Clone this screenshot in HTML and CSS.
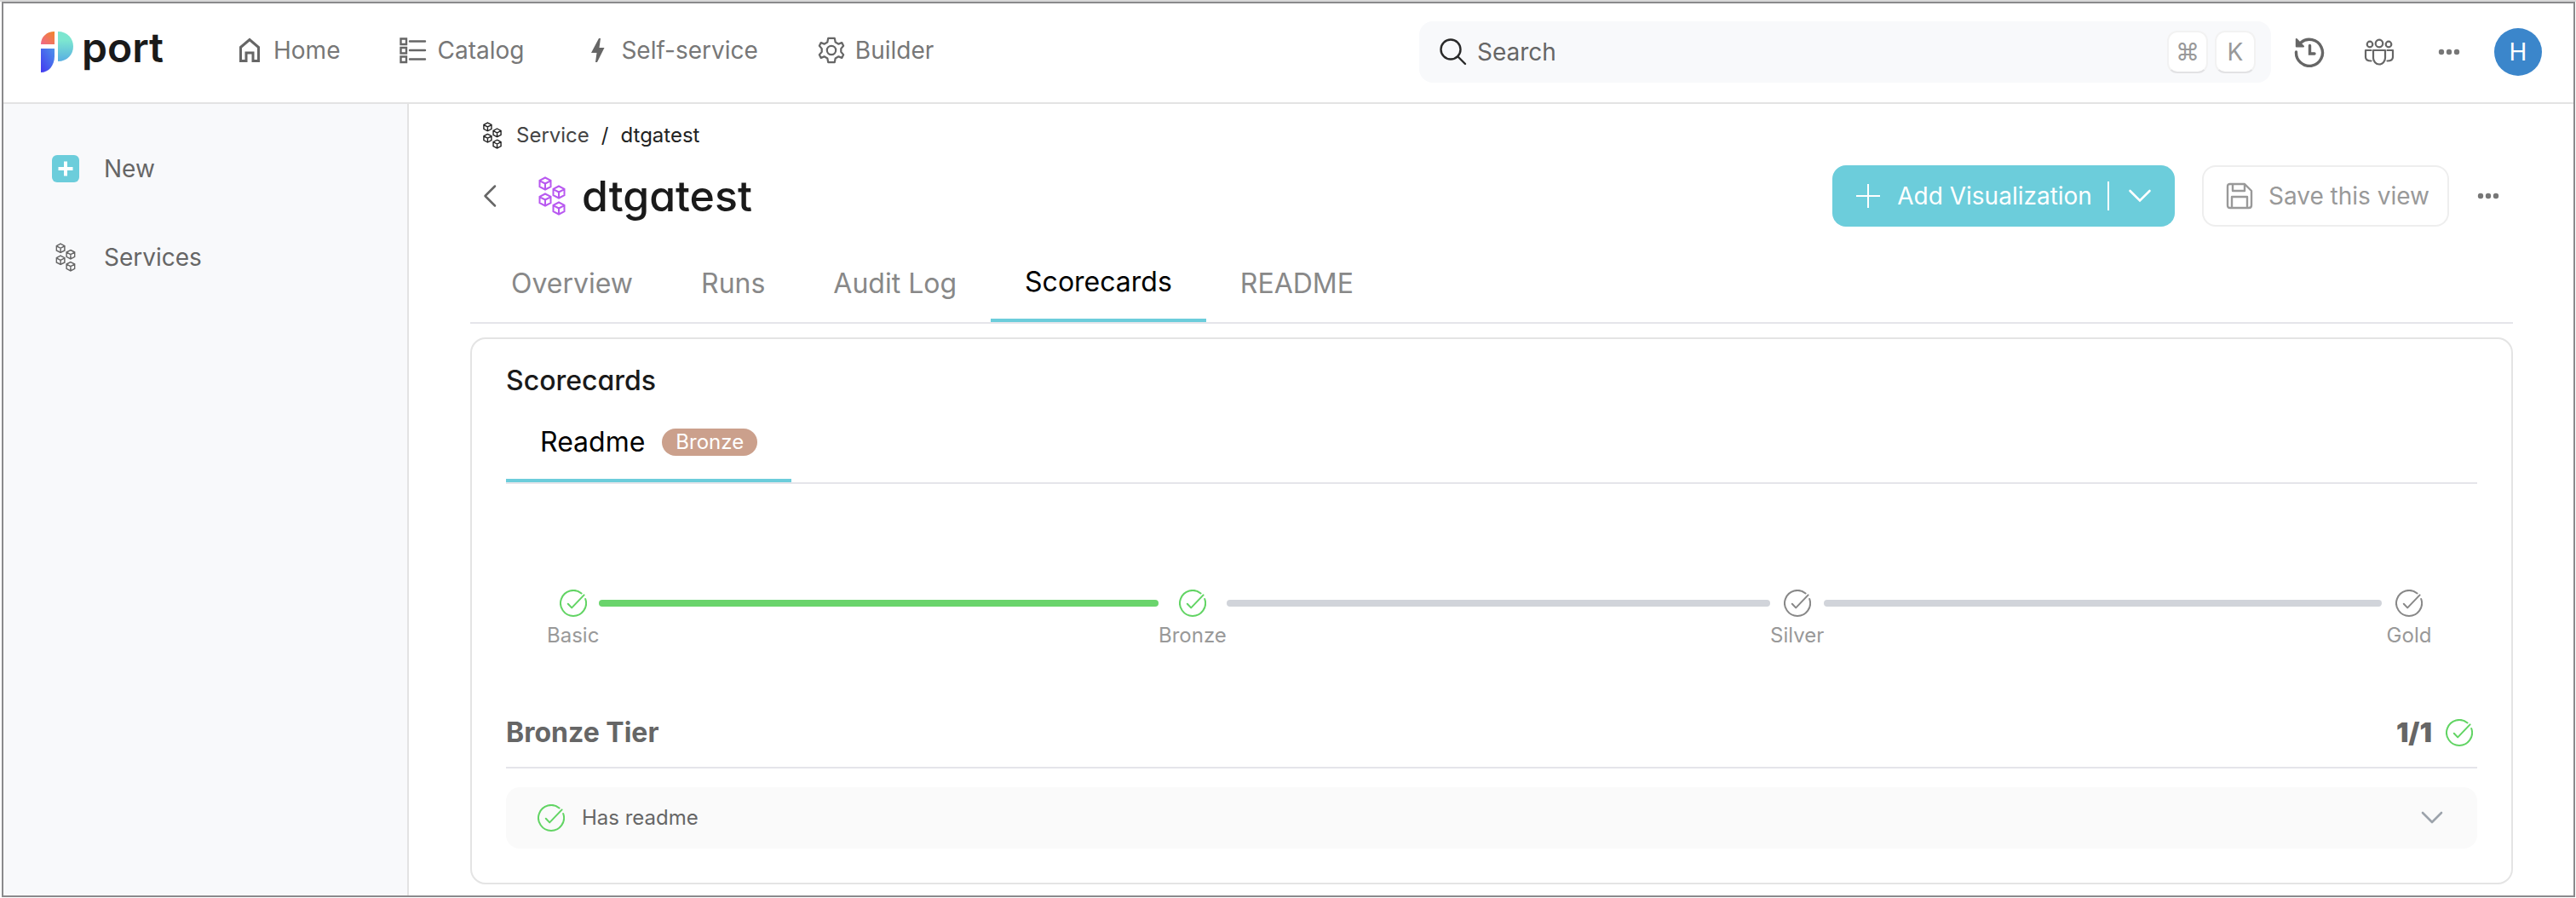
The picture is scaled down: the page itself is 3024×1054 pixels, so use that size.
FILE: index.html
```html
<!DOCTYPE html>
<html lang="en">
<head>
<meta charset="utf-8">
<title>dtgatest</title>
<meta name="viewport" content="width=device-width, initial-scale=1">
<link rel="stylesheet" href="styles.css">
</head>
<body>
<svg class="sprite" aria-hidden="true">
  <symbol id="cube" viewBox="-8 -8 16 16"><path d="M0-7 6.5-3.6V3.6L0 7-6.5 3.6V-3.6ZM-6.5-3.4 0 0 6.5-3.4M0 0V7"/></symbol>
  <symbol id="cubes" viewBox="0 0 32 46">
    <use href="#cube" x="0" y="0" width="16" height="17"/>
    <use href="#cube" x="16" y="10" width="16" height="17"/>
    <use href="#cube" x="0" y="19" width="16" height="17"/>
    <use href="#cube" x="16" y="29" width="16" height="17"/>
  </symbol>
  <symbol id="check" viewBox="0 0 32 32"><path d="M25.6 4.4A15 15 0 1 0 30.2 11M9.8 16.8 14.2 21.4 28.6 6.4"/></symbol>
  <symbol id="dots" viewBox="0 0 36 36"><circle cx="9" cy="18" r="3.2"/><circle cx="18" cy="18" r="3.2"/><circle cx="27" cy="18" r="3.2"/></symbol>
</svg>
<div class="frame">
  <header class="topbar">
    <a class="logo" href="#">
      <svg class="logo-mark" viewBox="0 0 38 48" aria-hidden="true">
        <defs>
          <linearGradient id="warm" x1="1" y1="0" x2="0" y2="1"><stop offset="0" stop-color="#f08528"/><stop offset="1" stop-color="#f0688c"/></linearGradient>
          <linearGradient id="mint" x1="0" y1="0" x2="0" y2="1"><stop offset=".3" stop-color="#7ce6d0"/><stop offset="1" stop-color="#58aee2"/></linearGradient>
          <linearGradient id="blue" x1="1" y1="0" x2="0" y2="1"><stop offset="0" stop-color="#4c93ea"/><stop offset="1" stop-color="#4338f0"/></linearGradient>
        </defs>
        <path fill="url(#warm)" d="M16 0V15H0C0 6 7 0 16 0Z"/>
        <path fill="url(#mint)" d="M20 0C31 0 38 8 38 17.500S31 35 20 35Z"/>
        <path fill="url(#blue)" d="M0 20H16V29C16 40 9 48 0 48Z"/>
      </svg>
      <span class="logo-text">port</span>
    </a>
    <nav class="topnav" aria-label="Main">
      <a href="#"><svg class="icon" viewBox="0 0 32 32" aria-hidden="true"><path stroke-width="3" d="M5.500 12.500 16 3.500 26.500 12.500V28.500H20V19H12V28.500H5.500Z"/></svg>Home</a>
      <a href="#"><svg class="icon" viewBox="0 0 32 32" aria-hidden="true"><path stroke-width="2.400" d="M1.500 2.500h6.500v6.500h-6.500zM1.500 13h6.500v6.500h-6.500zM1.500 23.500h6.500v6.500h-6.500zM12 5.500H30M12 16H30M12 26.500H30" stroke-linecap="round"/></svg>Catalog</a>
      <a href="#"><svg class="icon" viewBox="0 0 32 32" aria-hidden="true"><path class="solid" d="M18 2H20L18.500 13H24.500L16 30H14L15.500 19H9Z"/></svg>Self-service</a>
      <a href="#"><svg class="icon" viewBox="0 0 32 34" aria-hidden="true"><path stroke-width="2.400" stroke-linejoin="round" d="M12 2H20L21 7 25 9.200 29 7.500 31 11.500 28 15V19L31 22.500 29 26.500 25 24.800 21 27 20 32H12L11 27 7 24.800 3 26.500 1 22.500 4 19V15L1 11.500 3 7.500 7 9.200 11 7Z"/><circle cx="16" cy="17" r="5.500" stroke-width="2.400"/></svg>Builder</a>
    </nav>
    <div class="search">
      <svg class="icon search-icon" viewBox="0 0 32 32" aria-hidden="true"><circle cx="13" cy="13" r="11.500" stroke-width="2.400"/><path stroke-width="2.400" stroke-linecap="round" d="M21.500 21.500 30 30"/></svg>
      <input type="text" placeholder="Search" aria-label="Search">
      <kbd>⌘</kbd><kbd>K</kbd>
    </div>
    <div class="tools">
      <button type="button" aria-label="History"><svg viewBox="0 0 36 36" aria-hidden="true"><path stroke-width="3.400" stroke-linecap="round" d="M2.500 18A15.500 15.500 0 1 0 8 7M18.500 10.500V20H24"/><path class="solid" d="M2 3V11.500H11.500Z"/><path stroke-width="2" stroke-linejoin="round" d="M2.800 3V11.500H11Z"/></svg></button>
      <button type="button" aria-label="Members"><svg viewBox="0 0 36 36" aria-hidden="true"><g stroke-width="2.200" stroke-linejoin="round" stroke-linecap="round"><circle cx="7" cy="9" r="3.300"/><circle cx="29" cy="9" r="3.300"/><circle cx="18" cy="8" r="4.300"/><path d="M11 16H25V25A7 7.500 0 0 1 11 25ZM8.500 16H2V24Q2 28.500 8.500 28.500M27.500 16H34V24Q34 28.500 27.500 28.500"/></g></svg></button>
      <button type="button" aria-label="More"><svg class="dots" aria-hidden="true"><use href="#dots"/></svg></button>
    </div>
    <button class="avatar" type="button">H</button>
  </header>
  <div class="body">
    <aside class="sidebar">
      <button type="button"><svg viewBox="0 0 32 32" aria-hidden="true"><rect class="plus-box" width="32" height="32" rx="6"/><path class="plus-sign" d="M16 7.500V24.500M7.500 16H24.500"/></svg>New</button>
      <a href="#"><svg class="cubes-thin side-cubes" aria-hidden="true"><use href="#cubes"/></svg>Services</a>
    </aside>
    <main class="main">
      <nav class="crumbs" aria-label="Breadcrumb">
        <svg class="cubes-thin" aria-hidden="true"><use href="#cubes"/></svg>
        <a href="#">Service</a><span class="slash">/</span><a class="current" href="#">dtgatest</a>
      </nav>
      <div class="title-row">
        <button class="back" type="button" aria-label="Back"><svg viewBox="0 0 32 32" aria-hidden="true"><path d="M22 4.500 10.500 16 22 27.500"/></svg></button>
        <svg class="title-icon" aria-hidden="true"><use href="#cubes"/></svg>
        <h1>dtgatest</h1>
        <button class="btn primary" type="button">
          <svg class="icon" viewBox="0 0 32 32" aria-hidden="true"><path stroke-width="2" d="M16 2V30M2 16H30"/></svg>
          <span>Add Visualization</span><i class="divider"></i>
          <svg class="icon" viewBox="0 0 32 32" aria-hidden="true"><path stroke-width="2.600" stroke-linecap="round" d="M4.500 10 16 21.500 27.500 10"/></svg>
        </button>
        <button class="btn outline" type="button">
          <svg class="icon" viewBox="0 0 32 32" aria-hidden="true"><path stroke-width="2.400" stroke-linejoin="round" d="M4 2H22L30 10V27Q30 30 27 30H5Q2 30 2 27V5Q2 2 5 2M8 2V10H22V2M7 30V17H25V30"/></svg>
          <span>Save this view</span>
        </button>
        <button class="more" type="button" aria-label="More actions"><svg class="dots" aria-hidden="true"><use href="#dots"/></svg></button>
      </div>
      <nav class="tabs page-tabs" aria-label="Entity">
        <a href="#">Overview</a><a href="#">Runs</a><a href="#">Audit Log</a><a class="active" href="#">Scorecards</a><a href="#">README</a>
      </nav>
      <section class="card">
        <h2>Scorecards</h2>
        <nav class="tabs" aria-label="Scorecards">
          <a class="active" href="#">Readme<span class="badge">Bronze</span></a>
        </nav>
        <ol class="steps">
          <li class="done"><div class="step"><svg class="check" aria-hidden="true"><use href="#check"/></svg><span>Basic</span></div><i class="bar"></i></li>
          <li class="reached"><div class="step"><svg class="check" aria-hidden="true"><use href="#check"/></svg><span>Bronze</span></div><i class="bar"></i></li>
          <li><div class="step"><svg class="check" aria-hidden="true"><use href="#check"/></svg><span>Silver</span></div><i class="bar"></i></li>
          <li><div class="step"><svg class="check" aria-hidden="true"><use href="#check"/></svg><span>Gold</span></div></li>
        </ol>
        <div class="tier"><h3>Bronze Tier</h3><strong>1/1</strong><svg class="check pass" aria-hidden="true"><use href="#check"/></svg></div>
        <button class="rule" type="button">
          <svg class="check pass" aria-hidden="true"><use href="#check"/></svg>
          <span>Has readme</span>
          <svg class="icon chevron" viewBox="0 0 32 32" aria-hidden="true"><path stroke-width="2.600" stroke-linecap="round" stroke-linejoin="round" d="M5 10 16 21 27 10"/></svg>
        </button>
      </section>
    </main>
  </div>
</div>
</body>
</html>
```
FILE: styles.css
```css
* { box-sizing: border-box; }

body {
  margin: 0;
  border-top: 2px solid #d8d8d8;
  background: #fff;
  color: #666;
  font: 28px/36px Inter, "Liberation Sans", sans-serif;
}

a { color: inherit; text-decoration: none; }
button { margin: 0; padding: 0; border: 0; background: none; color: inherit; font: inherit; cursor: pointer; }
h1, h2, h3, ol { margin: 0; padding: 0; list-style: none; }
svg { flex: none; fill: none; stroke: currentColor; }
.sprite { display: none; }
.solid { fill: currentColor; stroke: none; }
.icon { width: 32px; height: 32px; }
.dots { width: 36px; height: 36px; display: block; fill: currentColor; stroke: none; }

.frame {
  display: flex;
  flex-direction: column;
  min-height: calc(100vh - 3px);
  margin: 0 1px 1px 2px;
  border: 2px solid #8a8a8c;
}

/* Top bar */
.topbar {
  display: flex;
  align-items: center;
  height: 118px;
  padding: 0 37px 2px 44px;
  border-bottom: 2px solid #e3e3e3;
}
.logo { display: flex; align-items: center; gap: 10px; flex: 0 0 229px; }
.logo-mark { width: 38px; height: 48px; stroke: none; }
.logo-text { color: #1a1a1a; font-size: 48px; font-weight: 600; line-height: 48px; padding-bottom: 10px; }
.topnav { display: flex; gap: 70px; padding-bottom: 4px; color: #777; white-space: nowrap; }
.topnav a { display: flex; align-items: center; gap: 12px; }
.topnav svg { color: #666; }
.search {
  display: flex;
  align-items: center;
  gap: 8px;
  flex: 0 1 1000px;
  height: 72px;
  margin-left: auto;
  padding: 0 18px 0 24px;
  border-radius: 16px;
  background: #f8f9fb;
}
.search-icon { color: #2a2a2a; }
.search input {
  flex: 1;
  min-width: 0;
  padding: 0 4px;
  border: 0;
  outline: 0;
  background: none;
  color: #666;
  font: inherit;
}
.search input::placeholder { color: #666; opacity: 1; }
kbd {
  display: grid;
  place-items: center;
  width: 48px;
  height: 50px;
  border: 2px solid #f2f2f2;
  border-bottom-color: #e2e2e4;
  border-radius: 12px;
  background: #fff;
  color: #999;
  font: inherit;
}
.tools { display: flex; gap: 46px; margin: 0 35px 0 27px; }
.tools svg { display: block; width: 36px; height: 36px; }
.tools .dots { color: #777; }
.avatar { width: 56px; height: 56px; border-radius: 50%; background: #3b86cb; color: #fff; }

/* Layout */
.body { display: flex; flex: 1; }
.sidebar {
  display: flex;
  flex-direction: column;
  gap: 68px;
  flex: 0 0 476px;
  padding: 58px 57px;
  border-right: 2px solid #e3e3e3;
  background: #f8f9fb;
}
.sidebar a, .sidebar button { display: flex; align-items: center; gap: 29px; text-align: left; }
.sidebar svg { width: 32px; height: 32px; }
.sidebar .side-cubes { height: 34px; }
.plus-box { fill: #6ccddb; stroke: none; }
.plus-sign { stroke: #fff; stroke-width: 4; }
.cubes-thin { stroke-width: 2; }
.main { flex: 1; min-width: 0; padding: 21px 71px 13px 72px; }

/* Breadcrumb and title */
.crumbs { display: flex; align-items: center; gap: 14px; padding-left: 12px; color: #444; font-size: 24px; line-height: 32px; }
.crumbs svg { width: 28px; height: 32px; color: #222; }
.crumbs .slash, .crumbs .current { color: #222; }
.title-row { display: flex; align-items: center; height: 72px; margin-top: 19px; padding: 0 11px 0 7px; }
.back svg { display: block; width: 32px; height: 32px; stroke-width: 2.5; stroke-linecap: round; stroke-linejoin: round; }
.title-icon { width: 36px; height: 46px; margin: 0 17px 0 39px; color: #b858f0; stroke-width: 2; }
h1, h2 { color: #1a1a1a; font-weight: 500; font-feature-settings: "cv11"; }
h1 { flex: 1; font-size: 50px; line-height: 56px; }
.btn { display: flex; align-items: center; height: 72px; border-radius: 16px; white-space: nowrap; }
.primary { gap: 18px; padding: 0 25px 0 26px; background: #6ccddb; color: #fff; }
.divider { width: 2px; height: 34px; background: #fff; }
.primary .divider + svg { margin-left: 2px; }
.outline { gap: 18px; margin-left: 32px; padding: 0 21px 0 26px; border: 2px solid #eee; color: #999; }
.more { margin-left: 28px; color: #777; }

/* Tabs */
.tabs { display: flex; border-bottom: 2px solid #e5e5ea; font-size: 32px; line-height: 40px; color: #888; }
.tabs a { display: flex; align-items: center; gap: 20px; height: 90px; padding: 0 40px; }
.tabs .active { border-bottom: 4px solid #6ccddb; color: #000; }
.page-tabs { margin-top: 22px; padding-left: 8px; }
.badge { padding: 0 16px; border-radius: 16px; background: #cba08c; color: #fff; font-size: 24px; line-height: 32px; }

/* Scorecard */
.card { margin-top: 16px; padding: 29px 40px 40px; border: 2px solid #e4e4e4; border-radius: 18px; }
h2 { margin-bottom: 9px; font-size: 32px; line-height: 40px; }
.steps { display: flex; padding: 124px 48px 78px; color: #888; }
.steps li { display: flex; flex: 1; }
.steps li:last-child { flex: 0 0 64px; justify-content: center; }
.step { display: flex; flex-direction: column; align-items: center; gap: 6px; }
.step span { color: #999; font-size: 24px; line-height: 32px; }
.check { width: 32px; height: 32px; stroke-width: 2; stroke-linecap: round; stroke-linejoin: round; }
.bar { flex: 1; height: 8px; margin-top: 12px; border-radius: 4px; background: #d1d4da; }
.done .bar { background: #6ad46c; }
.done .check, .reached .check, .pass { color: #62d464; }
.tier { display: flex; align-items: center; gap: 16px; padding: 0 5px 20px 0; border-bottom: 2px solid #e5e5ea; font-size: 32px; line-height: 40px; font-weight: 700; }
h3 { flex: 1; font: inherit; }
.rule {
  display: flex;
  align-items: center;
  gap: 20px;
  width: 100%;
  height: 72px;
  margin-top: 22px;
  padding: 0 37px;
  border-radius: 16px;
  background: #fafafa;
  font-size: 24px;
  line-height: 32px;
}
.chevron { margin-left: auto; color: #9ca3ab; }
```
